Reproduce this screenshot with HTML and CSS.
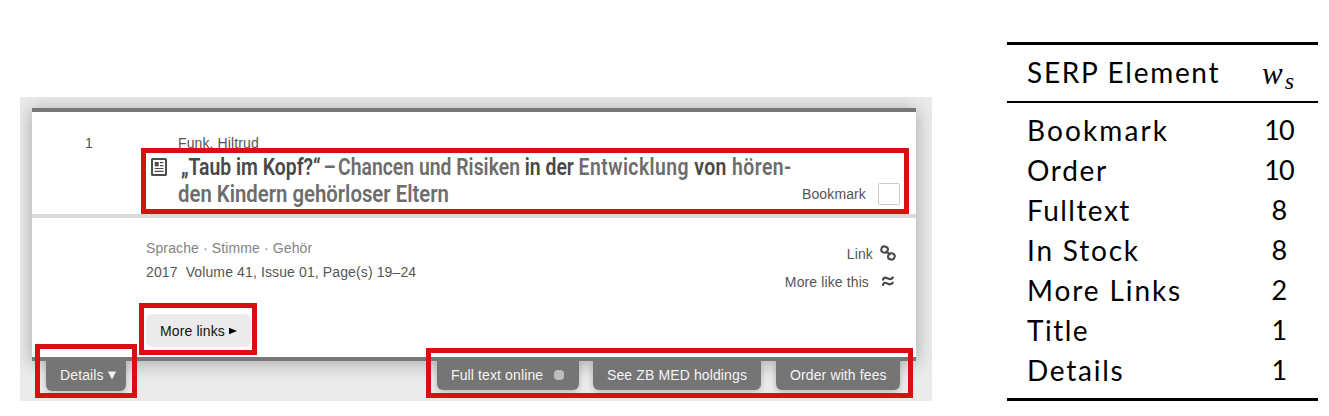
FILE: index.html
```html
<!DOCTYPE html>
<html lang="en">
<head>
<meta charset="utf-8">
<title>SERP elements</title>
<link rel="stylesheet" href="styles.css">
</head>
<body>
<main class="figure">
  <section class="panel">
    <article class="card">
      <header class="card-head">
        <span class="rank">1</span>
        <div class="head-main">
          <div class="author">Funk, Hiltrud</div>
          <div class="title-row">
            <svg class="doc-icon" viewBox="0 0 16 18" fill="none" stroke="#4c4c4c">
              <rect x="1" y="1" width="14" height="16" rx=".6" stroke-width="2"/>
              <rect x="3.7" y="4" width="4" height="4.4" fill="#4c4c4c" stroke="none"/>
              <path d="M9 4.7h3.4M9 7.6h3.4M3.6 10.5h8.8M3.6 13.3h8.8" stroke-width="1.2"/>
            </svg>
            <h1 class="title">
              <span class="line line-one"><b>„Taub im Kopf?“</b><span class="dash"> – </span>Chancen und Risiken <b>in der</b> <span class="wide">Entwicklung <b>von</b> hören-</span></span>
              <span class="line line-two">den Kindern gehörloser Eltern</span>
            </h1>
          </div>
        </div>
        <label class="bookmark"><span>Bookmark</span><i class="checkbox"></i></label>
      </header>
      <div class="card-body">
        <div class="meta">
          <p class="subject">Sprache · Stimme · Gehör</p>
          <p class="issue">2017&nbsp; Volume 41, Issue 01, Page(s) 19–24</p>
          <button class="more">More links <svg width="8" height="8" viewBox="0 0 8 8"><path d="M0 .8 8 4 0 7.2z"/></svg></button>
        </div>
        <div class="actions">
          <div class="action action-link">Link
            <svg class="link-icon" viewBox="0 0 16 16" fill="none" stroke="#4a4a4a" stroke-width="2">
              <rect x="1.3" y="1.5" width="6.6" height="6.2" rx="3" transform="rotate(15 4.6 4.6)"/>
              <rect x="8.1" y="8.3" width="6.6" height="6.2" rx="3" transform="rotate(15 11.4 11.4)"/>
              <path d="M5.8 6 10.4 10"/>
            </svg>
          </div>
          <div class="action action-like">More like this
            <svg class="like-icon" viewBox="0 0 12 11" fill="none" stroke="#454545" stroke-width="2.1">
              <path d="M.8 4.6C1.2 1.5 3 1 5 2.2S9.8 4 11.2.6M.8 9.8C1.2 6.7 3 6.2 5 7.4s4.8 1.8 6.2-1.6"/>
            </svg>
          </div>
        </div>
      </div>
    </article>
    <nav class="tabs">
      <span class="tab tab-details">Details <svg width="8" height="9" viewBox="0 0 8 9"><path fill="#f4f4f4" d="M0 .5h8L4 8.5z"/></svg></span>
      <span class="tab tab-full">Full text online<i class="dot"></i></span>
      <span class="tab tab-zb">See ZB MED holdings</span>
      <span class="tab tab-order">Order with fees</span>
    </nav>
    <i class="mark mark-title"></i>
    <i class="mark mark-more"></i>
    <i class="mark mark-details"></i>
    <i class="mark mark-order"></i>
  </section>
  <table class="weights">
    <thead><tr><th><span class="t0">SERP Element</span></th><th class="math">w<sub>s</sub></th></tr></thead>
    <tbody>
      <tr><td><span class="t1">Bookmark</span></td><td>10</td></tr>
      <tr><td><span class="t2">Order</span></td><td>10</td></tr>
      <tr><td><span class="t3">Fulltext</span></td><td>8</td></tr>
      <tr><td><span class="t4">In Stock</span></td><td>8</td></tr>
      <tr><td><span class="t5">More Links</span></td><td>2</td></tr>
      <tr><td><span class="t6">Title</span></td><td>1</td></tr>
      <tr><td><span class="t7">Details</span></td><td>1</td></tr>
    </tbody>
  </table>
</main>
</body>
</html>
```
FILE: styles.css
```css
* { box-sizing: border-box; }
body { margin: 0; background: #fff; }
.figure {
  display: flex;
  width: 1329px;
  height: 416px;
  padding-left: 20px;
  overflow: hidden;
}
.panel {
  position: relative;
  flex: none;
  width: 912px;
  height: 304px;
  margin-top: 97px;
  padding: 11px 16px 0 12px;
  background: #ebebeb;
  font: 14px/20px "Liberation Sans", Arial, sans-serif;
  letter-spacing: .12px;
  color: #555;
  overflow: hidden;
}
.card {
  width: 884px;
  height: 253px;
  background: #fff;
  border-top: 4px solid #777;
  border-bottom: 4px solid #777;
  box-shadow: 0 2px 18px rgba(0, 0, 0, .3);
}
.card-head {
  display: flex;
  height: 106px;
  border-bottom: 4px solid #d9d9d9;
}
.rank { width: 119px; padding: 21px 0 0 53px; flex: none; }
.head-main { padding-top: 21px; width: 651px; }
.author { padding-left: 27px; height: 21px; }
.title-row { display: flex; }
.doc-icon { width: 16px; height: 18px; margin-top: 4px; flex: none; }
.title {
  margin: 0 0 0 11px;
  font: 600 23px/27px Roboto, sans-serif;
  letter-spacing: 0;
  color: #6d6d6d;
}
.title b { font-weight: 600; color: #484848; }
.line { display: block; width: max-content; transform-origin: 0 50%; }
.line-one { margin-left: 3px; transform: scaleX(.843); }
.line-two { transform: scaleX(.884); }
.dash { word-spacing: -1.6px; letter-spacing: -.8px; }
.wide { letter-spacing: .5px; }
.bookmark { display: flex; gap: 12px; align-items: center; height: 22px; margin-top: 71px; white-space: nowrap; }
.checkbox { width: 22px; height: 22px; border: 1px solid #ccc; border-radius: 2px; background: #fff; }
.card-body { display: flex; justify-content: space-between; padding: 20px 20px 0 114px; }
.meta p { margin: 0 0 4px; }
.subject { color: #838383; }
.more {
  display: flex;
  align-items: center;
  gap: 4px;
  width: 105px;
  height: 33px;
  margin-top: 32px;
  padding: 0 0 0 14px;
  border: 0;
  border-radius: 6px;
  background: #ebebeb;
  color: #111;
  font: inherit;
  letter-spacing: inherit;
}
.actions { display: flex; flex-direction: column; align-items: flex-end; gap: 8px; padding-top: 6px; }
.action { display: flex; align-items: center; }
.link-icon { width: 16px; height: 16px; margin: -2px 0 0 7px; }
.like-icon { width: 12px; height: 11px; margin: -1px 2px 0 13px; }
.tabs { display: flex; align-items: flex-start; padding-left: 14px; }
.tab {
  position: relative;
  display: flex;
  align-items: center;
  height: 29px;
  padding: 0 0 1px 14px;
  border-radius: 0 0 6px 6px;
  background: #757575;
  color: #f4f4f4;
  box-shadow: 0 2px 6px rgba(0, 0, 0, .22);
  clip-path: inset(0 -12px -12px -12px);
}
.tab-details { width: 80px; height: 30px; gap: 4px; margin-right: 311px; padding-bottom: 2px; }
.tab-full { width: 142px; margin-right: 14px; }
.tab-zb { width: 168px; margin-right: 15px; }
.tab-order { width: 124px; }
.dot { width: 10px; height: 10px; margin: -1px 0 0 11px; border-radius: 4px; background: #bdbdbd; }
.mark { position: absolute; border: 5px solid #d71111; }
.mark-title { left: 121px; top: 51px; width: 768px; height: 66px; }
.mark-more { left: 119px; top: 206px; width: 118px; height: 52px; }
.mark-details { left: 15px; top: 247px; width: 102px; height: 54px; }
.mark-order { left: 406px; top: 251px; width: 487px; height: 50px; }
.weights {
  flex: none;
  width: 311px;
  height: 359px;
  margin: 42px 0 0 75px;
  border-collapse: separate;
  border-spacing: 0;
  border-top: 3px solid #000;
  border-bottom: 3px solid #000;
  font: 28px/40px Lato, sans-serif;
  color: #000;
}
.weights th, .weights td { padding: 0; text-align: center; font-weight: 400; height: 40px; }
.weights th { height: 58px; padding-bottom: 2px; border-bottom: 2px solid #000; }
.weights th:first-child, .weights td:first-child { width: 233px; padding-left: 20px; text-align: left; }
.weights tbody tr:first-child td { height: 47px; padding-top: 7px; }
.weights tbody tr:last-child td { height: 48px; padding-bottom: 8px; }
.weights td + td { font-size: 27px; letter-spacing: -.8px; }
.weights .math { font: italic 31px/40px "Liberation Serif", serif; padding: 2px 2px 0 0; }
.math sub { font-size: 24px; line-height: 0; vertical-align: -5px; margin-left: 2px; }
.t0 { letter-spacing: 1.7px; }
.t1 { letter-spacing: 2.1px; }
.t2 { letter-spacing: 1.7px; }
.t3 { letter-spacing: 1.45px; }
.t4 { letter-spacing: 1.8px; }
.t5 { letter-spacing: 1.9px; }
.t6 { letter-spacing: 1.5px; }
.t7 { letter-spacing: 1.75px; }
```
